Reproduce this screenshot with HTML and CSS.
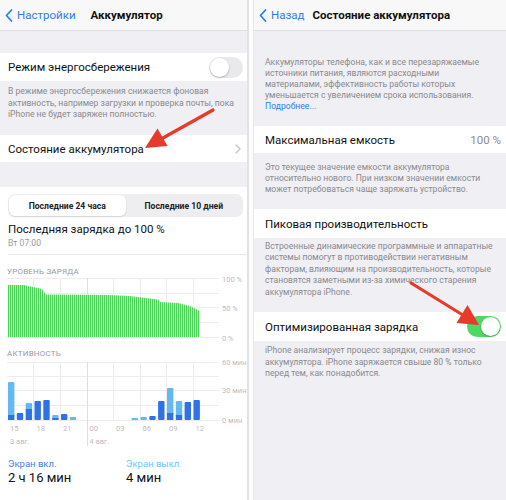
FILE: index.html
```html
<!DOCTYPE html>
<html lang="ru">
<head>
<meta charset="utf-8">
<link rel="stylesheet" href="styles.css">
</head>
<body>
<div class="screen left">
  <div class="nav">
    <svg class="back-chev" width="8" height="13" viewBox="0 0 8 13"><path d="M6.5 1 L1.5 6.5 L6.5 12" fill="none" stroke="#2f7cf6" stroke-width="1.8" stroke-linecap="round" stroke-linejoin="round"/></svg>
    <span class="back-text">Настройки</span>
    <span class="nav-title left-title">Аккумулятор</span>
  </div>
  <div class="gap g1"></div>
  <div class="row">
    <span class="row-label">Режим энергосбережения</span>
    <span class="toggle off"><span class="knob"></span></span>
  </div>
  <div class="footer lf1">В режиме энергосбережения снижается фоновая активность, например загрузки и проверка почты, пока iPhone не будет заряжен полностью.</div>
  <div class="row row2">
    <span class="row-label">Состояние аккумулятора</span>
    <svg class="chev" width="6" height="10" viewBox="0 0 6 10"><path d="M1 1 L5 5 L1 9" fill="none" stroke="#c4c4c8" stroke-width="1.3" stroke-linecap="round" stroke-linejoin="round"/></svg>
  </div>
  <div class="gap g2"></div>
  <div class="usage">
    <div class="seg">
      <span class="seg-item active">Последние 24 часа</span>
      <span class="seg-item">Последние 10 дней</span>
    </div>
    <div class="last-charge">Последняя зарядка до 100 %</div>
    <div class="last-time">Вт 07:00</div>
    <div class="sep"></div>
    <div class="chart-title">УРОВЕНЬ ЗАРЯДА</div>
    <svg class="chart battery" width="247" height="66" viewBox="0 0 247 66">
      <defs>
        <pattern id="stripes" x="8" y="0" width="2" height="66" patternUnits="userSpaceOnUse">
          <rect x="0" y="0" width="1.1" height="66" fill="#4ad356"/>
          <rect x="1.1" y="0" width="0.9" height="66" fill="#c2f0c4"/>
        </pattern>
      </defs>
      <g stroke="#ededed" stroke-width="1">
        <line x1="7" y1="1.5" x2="219" y2="1.5"/>
        <line x1="7" y1="16.5" x2="219" y2="16.5"/>
        <line x1="7" y1="30.5" x2="219" y2="30.5"/>
        <line x1="7" y1="45.5" x2="219" y2="45.5"/>
        <line x1="7" y1="60.5" x2="219" y2="60.5"/>
        <line x1="33.5" y1="1" x2="33.5" y2="61"/>
        <line x1="60.5" y1="1" x2="60.5" y2="61"/>
        <line x1="113.5" y1="1" x2="113.5" y2="61"/>
        <line x1="140.5" y1="1" x2="140.5" y2="61"/>
        <line x1="166.5" y1="1" x2="166.5" y2="61"/>
        <line x1="193.5" y1="1" x2="193.5" y2="61"/>
      </g>
      <line x1="87.5" y1="1" x2="87.5" y2="61" stroke="#dedede" stroke-width="1"/>
      <path d="M8 60 L8 8 L24 8 L30 9.5 L38 11 L42 12 L44 15 L46 17.5 L108 18 L130 19 L150 21.5 L158 22.5 L160 25 L178 26 L182 27 L190 29 L194 31 L200 34 L200 60 Z" fill="url(#stripes)"/>
      <g class="axis">
        <text x="222" y="4.5">100 %</text>
        <text x="222" y="33.5">50 %</text>
        <text x="222" y="63.5">0 %</text>
      </g>
    </svg>
    <div class="chart-title act-title">АКТИВНОСТЬ</div>
    <svg class="chart activity" width="247" height="90" viewBox="0 0 247 90">
      <g stroke="#ededed" stroke-width="1">
        <line x1="7" y1="3.5" x2="219" y2="3.5"/>
        <line x1="7" y1="17.5" x2="219" y2="17.5"/>
        <line x1="7" y1="31.5" x2="219" y2="31.5"/>
        <line x1="7" y1="46.5" x2="219" y2="46.5"/>
        <line x1="7" y1="61.5" x2="219" y2="61.5"/>
        <line x1="33.5" y1="3" x2="33.5" y2="62"/>
        <line x1="60.5" y1="3" x2="60.5" y2="62"/>
        <line x1="113.5" y1="3" x2="113.5" y2="62"/>
        <line x1="140.5" y1="3" x2="140.5" y2="62"/>
        <line x1="166.5" y1="3" x2="166.5" y2="62"/>
        <line x1="193.5" y1="3" x2="193.5" y2="62"/>
      </g>
      <line x1="87.5" y1="3" x2="87.5" y2="87" stroke="#dedede" stroke-width="1"/>
      <g class="light">
        <rect x="8" y="23" width="6.4" height="35" rx="1"/>
        <rect x="25.7" y="44" width="6.4" height="8" rx="1"/>
        <rect x="52.2" y="56" width="6.4" height="4" rx="1"/>
        <rect x="69.8" y="58" width="6.4" height="3" rx="1"/>
        <rect x="131.6" y="59" width="6.4" height="2" rx="0.5"/>
        <rect x="140.5" y="58" width="6.4" height="3" rx="1"/>
        <rect x="167" y="29" width="6.4" height="27" rx="1"/>
        <rect x="175.8" y="42" width="6.4" height="16" rx="1"/>
      </g>
      <g class="dark">
        <rect x="8" y="56" width="6.4" height="5"/>
        <rect x="16.8" y="54" width="6.4" height="7" rx="1"/>
        <rect x="25.7" y="50" width="6.4" height="11"/>
        <rect x="34.5" y="42" width="6.4" height="19" rx="1"/>
        <rect x="43.3" y="41" width="6.4" height="20" rx="1"/>
        <rect x="52.2" y="59" width="6.4" height="2"/>
        <rect x="61" y="55" width="6.4" height="6" rx="1"/>
        <rect x="149.3" y="57" width="6.4" height="4" rx="1"/>
        <rect x="158.1" y="42" width="6.4" height="19" rx="1"/>
        <rect x="167" y="54" width="6.4" height="7"/>
        <rect x="175.8" y="56" width="6.4" height="5"/>
        <rect x="184.6" y="43" width="6.4" height="18" rx="1"/>
        <rect x="193.5" y="41" width="6.4" height="20" rx="1"/>
      </g>
      <g class="axis">
        <text x="222" y="6">60 мин</text>
        <text x="222" y="34">30 мин</text>
        <text x="222" y="64">0 мин</text>
      </g>
      <g class="axis">
        <text x="10" y="72">15</text>
        <text x="36.5" y="72">18</text>
        <text x="63" y="72">21</text>
        <text x="89.5" y="72">00</text>
        <text x="116" y="72">03</text>
        <text x="142.5" y="72">06</text>
        <text x="169" y="72">09</text>
        <text x="195.6" y="72">12</text>
        <text x="10" y="85">3 авг.</text>
        <text x="89.5" y="85">4 авг.</text>
      </g>
    </svg>
    <div class="screen-stats">
      <div class="stat">
        <div class="stat-label on">Экран вкл.</div>
        <div class="stat-value">2 ч 16 мин</div>
      </div>
      <div class="stat">
        <div class="stat-label offc">Экран выкл.</div>
        <div class="stat-value">4 мин</div>
      </div>
    </div>
  </div>
</div>
<div class="divider"></div>
<div class="screen right">
  <div class="nav">
    <svg class="back-chev" width="8" height="13" viewBox="0 0 8 13"><path d="M6.5 1 L1.5 6.5 L6.5 12" fill="none" stroke="#2f7cf6" stroke-width="1.8" stroke-linecap="round" stroke-linejoin="round"/></svg>
    <span class="back-text">Назад</span>
    <span class="nav-title right-title">Состояние аккумулятора</span>
  </div>
  <div class="intro">Аккумуляторы телефона, как и все перезаряжаемые<br>источники питания, являются расходными<br>материалами, эффективность работы которых<br>уменьшается с увеличением срока использования.<br><span class="link">Подробнее...</span></div>
  <div class="row r-row r1">
    <span class="row-label">Максимальная емкость</span>
    <span class="value">100 %</span>
  </div>
  <div class="footer rf">Это текущее значение емкости аккумулятора относительно нового. При низком значении емкости может потребоваться чаще заряжать устройство.</div>
  <div class="row r-row r2">
    <span class="row-label">Пиковая производительность</span>
  </div>
  <div class="footer rf rf2">Встроенные динамические программные и аппаратные системы помогут в противодействии негативным факторам, влияющим на производительность, которые становятся заметными из-за химического старения аккумулятора iPhone.</div>
  <div class="row r-row r3">
    <span class="row-label">Оптимизированная зарядка</span>
    <span class="toggle on"><span class="knob"></span></span>
  </div>
  <div class="footer rf rf3">iPhone анализирует процесс зарядки, снижая износ аккумулятора. iPhone заряжается свыше 80 % только перед тем, как понадобится.</div>
</div>
<svg class="arrows" width="506" height="500" viewBox="0 0 506 500">
  <g stroke="#e63a2b" stroke-width="3.2" stroke-linecap="round" fill="#e63a2b">
    <line x1="213" y1="110" x2="162" y2="138.5"/>
    <line x1="411" y1="283" x2="462" y2="314.5"/>
  </g>
  <polygon points="145,148 167.5,146 157.5,128.5" fill="#e63a2b"/>
  <polygon points="479,325 467.5,305 456.5,323" fill="#e63a2b"/>
</svg>
</body>
</html>
```
FILE: styles.css
```css
* { box-sizing: border-box; }
body {
  margin: 0;
  width: 506px;
  height: 500px;
  overflow: hidden;
  display: flex;
  position: relative;
  background: #ffffff;
  font-family: Roboto, "Liberation Sans", sans-serif;
  color: #111;
}
.screen {
  height: 500px;
  background: #efeff4;
  display: flex;
  flex-direction: column;
  overflow: hidden;
}
.screen.left { width: 249px; border-right: 2px solid #e2e2e6; flex: none; }
.divider { width: 4px; background: #fdfdfd; flex: none; }
.screen.right { flex: 1; border-left: 1px solid #e6e6ea; }

.nav {
  height: 31px;
  flex: none;
  background: #f8f8f8;
  border-bottom: 1px solid #dedee2;
  display: flex;
  align-items: center;
  padding-left: 5px;
  font-size: 11.5px;
}
.back-chev { flex: none; }
.back-text { color: #2f7cf6; margin-left: 4px; }
.nav-title { font-weight: 700; color: #111; }
.left-title { margin-left: 15px; }
.right-title { margin-left: 8px; }

.gap.g1 { height: 22px; flex: none; }
.gap.g2 { height: 25px; flex: none; }

.row {
  background: #fff;
  display: flex;
  align-items: center;
  justify-content: space-between;
  padding: 0 4px 0 8px;
  height: 28px;
  flex: none;
  font-size: 11.5px;
}
.row2 { height: 27px; padding-right: 6px; }
.row-label { color: #111; }

.toggle {
  width: 34px;
  height: 21px;
  border-radius: 11px;
  position: relative;
  flex: none;
}
.toggle.off { background: #e9e9eb; }
.toggle.off .knob { left: 1px; }
.toggle.on { background: #4cd964; }
.toggle.on .knob { right: 1px; }
.knob {
  position: absolute;
  top: 1px;
  width: 19px;
  height: 19px;
  border-radius: 50%;
  background: #fff;
  box-shadow: 0 1px 2px rgba(0,0,0,0.25);
}

.footer {
  font-size: 8.6px;
  line-height: 11.5px;
  color: #8a8a8f;
  padding: 5px 3px 0 8px;
  flex: none;
}
.lf1 { height: 54px; }

.usage {
  background: #fff;
  flex: 1;
  padding: 7px 0 0;
}
.seg {
  margin: 0 4px 0 8px;
  height: 23px;
  background: #eeeef0;
  border-radius: 7px;
  display: grid;
  grid-template-columns: 1fr 1fr;
  padding: 1px;
  font-size: 8.6px;
  font-weight: 700;
}
.seg-item { display: flex; align-items: center; justify-content: center; color: #222; }
.seg-item.active { background: #fff; border-radius: 6px; box-shadow: 0 1px 2px rgba(0,0,0,0.12); }

.last-charge { font-size: 11.5px; line-height: 14px; margin: 5px 8px 0; }
.last-time { font-size: 8.6px; line-height: 12px; margin: 1px 8px 0; color: #9a9a9f; }
.sep { height: 1px; background: #e8e8ea; margin: 5px 0 0 8px; }
.chart-title { font-size: 8px; line-height: 10px; color: #9a9a9f; margin: 12px 7px 0; letter-spacing: 0.2px; }
.act-title { margin-top: 6px; }
.chart { display: block; overflow: visible; }
.axis text { font-size: 7.5px; fill: #bdbdc0; font-family: Roboto, "Liberation Sans", sans-serif; }
.light rect { fill: #64b9f4; }
.dark rect { fill: #2e72e6; }

.screen-stats {
  display: grid;
  grid-template-columns: 118px 118px;
  padding: 9px 8px 0;
}
.stat-label { font-size: 9.5px; line-height: 12px; }
.stat-label.on { color: #3a82ec; }
.stat-label.offc { color: #6cc5f5; }
.stat-value { font-size: 13px; line-height: 16px; color: #111; }

.intro {
  font-size: 8.6px;
  line-height: 11px;
  color: #8a8a8f;
  padding: 26px 4px 0 11px;
  height: 95px;
  flex: none;
}
.link { color: #2f7cf6; }
.r-row { padding: 0 5px 0 11px; }
.r1 { height: 27px; }
.r2 { height: 29px; }
.r3 { height: 29px; }
.value { color: #8a8a8f; font-size: 11.5px; }
.rf { padding: 9px 4px 0 11px; line-height: 11px; height: 56px; }
.rf2 { padding-top: 3px; line-height: 11.4px; height: 74px; }
.rf3 { padding-top: 4px; line-height: 11.5px; }

.arrows { position: absolute; left: 0; top: 0; pointer-events: none; }
```
